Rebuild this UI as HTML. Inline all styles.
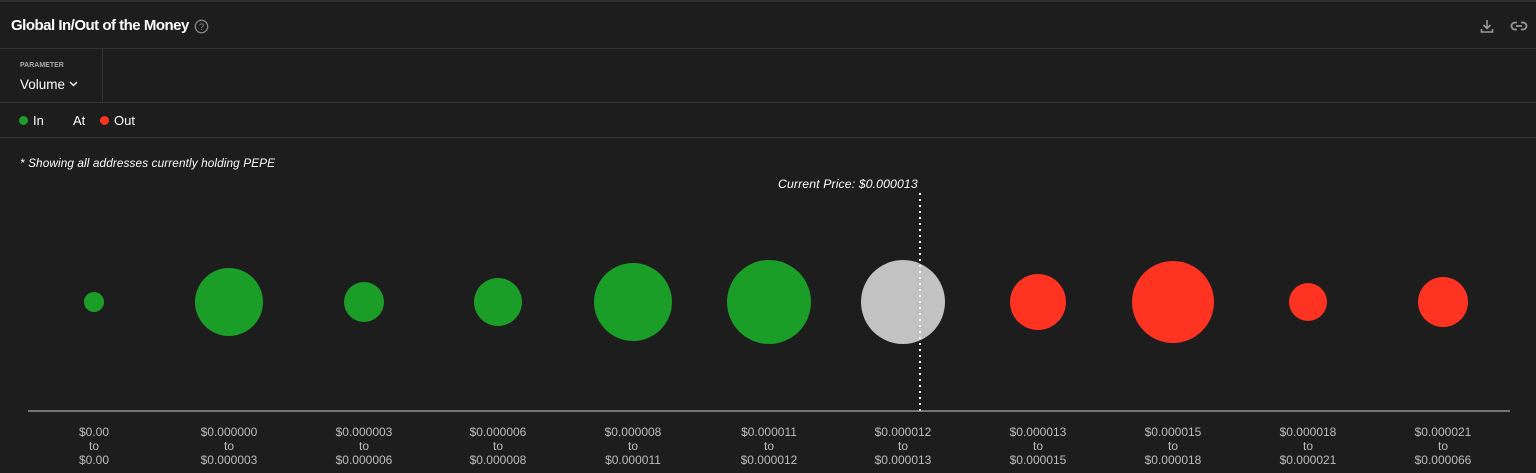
<!DOCTYPE html>
<html><head><style>
body{margin:0;width:1536px;height:473px;background:#1d1d1d;font-family:"Liberation Sans",sans-serif;color:#fff;overflow:hidden;position:relative}
.a{position:absolute}
.line{position:absolute;left:0;width:1536px;height:1px;background:#333}
.lbl{position:absolute;top:425px;width:120px;text-align:center;font-size:12px;line-height:14px;color:#bdbdbd}
</style></head><body>
<div class="a" style="left:0;top:0;width:1536px;height:2px;background:#2e2e2e"></div>
<div class="a" style="left:11px;top:17px;font-size:15px;font-weight:bold;letter-spacing:-0.5px">Global In/Out of the Money</div>
<svg class="a" style="left:194px;top:19px" width="15" height="15" viewBox="0 0 14 14"><circle cx="7" cy="7" r="5.8" fill="none" stroke="#888" stroke-width="1.2"/><text x="7" y="10.3" font-size="9" fill="#888" text-anchor="middle" font-family="Liberation Sans">?</text></svg>
<svg class="a" style="left:1479px;top:18px" width="16" height="16" viewBox="0 0 16 16" fill="none" stroke="#999" stroke-width="1.6"><path d="M8 2v8M4.5 7L8 10.5 11.5 7M2.5 11v3h11v-3"/></svg>
<svg class="a" style="left:1510px;top:19px" width="18" height="14" viewBox="0 0 18 14" fill="none" stroke="#999" stroke-width="1.8"><path d="M7 3.5H5a3.5 3.5 0 0 0 0 7h2M11 3.5h2a3.5 3.5 0 0 1 0 7h-2M6 7h6"/></svg>
<div class="line" style="top:48px"></div>
<div class="a" style="left:102px;top:48px;width:1px;height:54px;background:#333"></div>
<div class="a" style="left:20px;top:62px;font-size:7px;font-weight:bold;color:#aaa">PARAMETER</div>
<div class="a" style="left:20px;top:77px;font-size:13.5px">Volume <svg width="9" height="6" viewBox="0 0 9 6" style="vertical-align:2px"><path d="M1 1l3.5 3.5L8 1" fill="none" stroke="#fff" stroke-width="1.4"/></svg></div>
<div class="line" style="top:102px"></div>
<div class="a" style="left:19px;top:116px;width:9px;height:9px;border-radius:50%;background:#1a9e27"></div>
<div class="a" style="left:33px;top:113px;font-size:13px">In</div>
<div class="a" style="left:73px;top:113px;font-size:13px">At</div>
<div class="a" style="left:100px;top:116px;width:9px;height:9px;border-radius:50%;background:#ff3322"></div>
<div class="a" style="left:114px;top:113px;font-size:13px">Out</div>
<div class="line" style="top:137px"></div>
<div class="a" style="left:20px;top:156px;font-size:11.8px;font-style:italic;letter-spacing:0.1px">* Showing all addresses currently holding PEPE</div>
<div class="a" style="left:778px;top:177px;font-size:12.3px;font-style:italic;letter-spacing:0.1px">Current Price: $0.000013</div>
<svg class="a" style="left:0;top:0" width="1536" height="473">
<g fill="#1a9e27"><circle cx="94" cy="302" r="10"/><circle cx="229" cy="302" r="34"/><circle cx="364" cy="302" r="20"/><circle cx="498" cy="302" r="24"/><circle cx="633" cy="302" r="39"/><circle cx="769" cy="302" r="42"/></g>
<circle cx="903" cy="302" r="42" fill="#c2c2c2"/>
<g fill="#ff3322"><circle cx="1038" cy="302" r="28"/><circle cx="1173" cy="302" r="41"/><circle cx="1308" cy="302" r="19"/><circle cx="1443" cy="302" r="25"/></g>
<line x1="920" y1="193" x2="920" y2="411" stroke="#fff" stroke-width="2" stroke-dasharray="2,4"/>
<line x1="28" y1="411" x2="1510" y2="411" stroke="#ccc" stroke-width="1"/>
</svg>
<div class="lbl" style="left:34px">$0.00<br>to<br>$0.00</div>
<div class="lbl" style="left:169px">$0.000000<br>to<br>$0.000003</div>
<div class="lbl" style="left:304px">$0.000003<br>to<br>$0.000006</div>
<div class="lbl" style="left:438px">$0.000006<br>to<br>$0.000008</div>
<div class="lbl" style="left:573px">$0.000008<br>to<br>$0.000011</div>
<div class="lbl" style="left:709px">$0.000011<br>to<br>$0.000012</div>
<div class="lbl" style="left:843px">$0.000012<br>to<br>$0.000013</div>
<div class="lbl" style="left:978px">$0.000013<br>to<br>$0.000015</div>
<div class="lbl" style="left:1113px">$0.000015<br>to<br>$0.000018</div>
<div class="lbl" style="left:1248px">$0.000018<br>to<br>$0.000021</div>
<div class="lbl" style="left:1383px">$0.000021<br>to<br>$0.000066</div>
</body></html>
